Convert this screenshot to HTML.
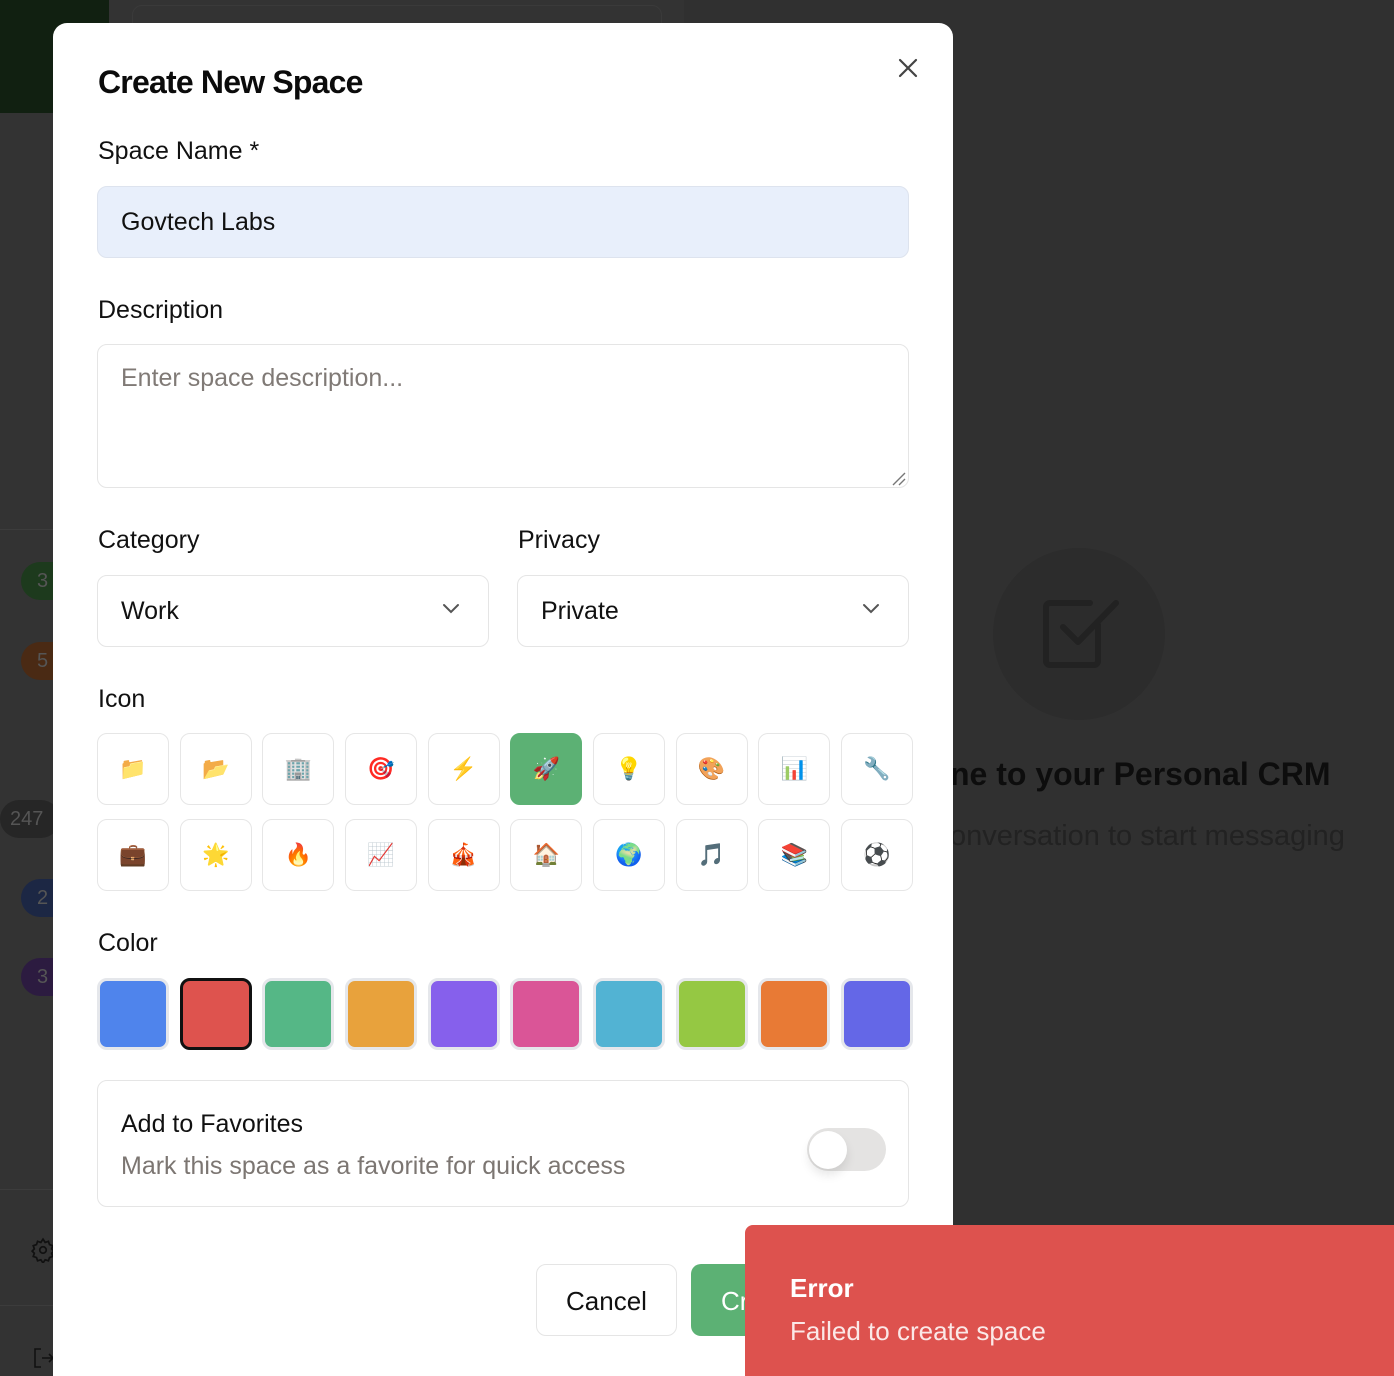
<!DOCTYPE html>
<html style="width:1394px;height:1376px;overflow:hidden"><head><meta charset="utf-8"><style>
*{box-sizing:border-box;margin:0;padding:0}
html,body{width:1394px;height:1376px;overflow:hidden}
body{background:#303030;font-family:"Liberation Sans",sans-serif;position:relative}
.abs{position:absolute}
.lbl{position:absolute;left:98px;font-size:25px;color:#111}
.box{position:absolute;border:1px solid #e5e5e5;border-radius:10px;background:#fff}
.tiles{position:absolute;left:97px;display:flex;gap:10.67px}
.tile{width:72px;height:72px;border:1px solid #e6e6e6;border-radius:10px;background:#fff;display:flex;align-items:center;justify-content:center;font-size:22px;font-family:"Noto Color Emoji","DejaVu Sans",sans-serif}
.sw{width:72px;height:72px;border:3px solid #e5e7eb;border-radius:10px}
.badge{position:absolute;height:38px;border-radius:19px;color:#555;font-size:20px;line-height:38px;padding-left:16px}
</style></head><body>
<div class="abs" style="left:0;top:0;width:109px;height:113px;background:#112011"></div>
<div class="abs" style="left:0;top:113px;width:53px;height:1263px;background:#333"></div>
<div class="abs" style="left:0;top:529px;width:53px;height:1px;background:#3c3c3c"></div>
<div class="abs" style="left:0;top:1189px;width:53px;height:1px;background:#3c3c3c"></div>
<div class="abs" style="left:0;top:1305px;width:53px;height:1px;background:#3c3c3c"></div>
<svg class="abs" style="left:30px;top:1237px" width="26" height="26" viewBox="0 0 24 24" fill="none" stroke="#111" stroke-width="1.6"><circle cx="12" cy="12" r="3"/><path d="M12 2l2 3 3-1 1 3 3 1-1 3 2 2-2 2 1 3-3 1-1 3-3-1-2 3-2-3-3 1-1-3-3-1 1-3-2-2 2-2-1-3 3-1 1-3 3 1z"/></svg>
<svg class="abs" style="left:32px;top:1346px" width="24" height="24" viewBox="0 0 24 24" fill="none" stroke="#111" stroke-width="1.6"><path d="M9 3H3v18h6M10 12h11M17 8l4 4-4 4"/></svg>
<div class="abs" style="left:109px;top:0;width:575px;height:40px;background:#333"></div>
<div class="abs" style="left:132px;top:5px;width:530px;height:40px;border:1px solid #3a3a3a;border-radius:10px"></div>
<div class="badge" style="left:21px;top:562px;width:60px;background:#1d3a1d">3</div>
<div class="badge" style="left:21px;top:642px;width:60px;background:#4a2a14">5</div>
<div class="badge" style="left:0;top:800px;width:60px;background:#262626;padding-left:10px">247</div>
<div class="badge" style="left:21px;top:879px;width:60px;background:#1c2744">2</div>
<div class="badge" style="left:21px;top:958px;width:60px;background:#2c1b40">3</div>
<div class="abs" style="left:993px;top:548px;width:172px;height:172px;border-radius:50%;background:#2c2c2c"></div>
<svg class="abs" style="left:1040px;top:595px" width="80" height="80" viewBox="0 0 80 80" fill="none" stroke="#222" stroke-width="6" stroke-linecap="round" stroke-linejoin="round"><path d="M58 30V66a4 4 0 0 1-4 4H10a4 4 0 0 1-4-4V12a4 4 0 0 1 4-4H50"/><path d="M23 32l15 15 38-39"/></svg>
<div class="abs" style="left:950px;top:756px;font-size:32px;font-weight:bold;color:#0d0d0d;white-space:nowrap">ne to your Personal CRM</div>
<div class="abs" style="left:950px;top:820px;font-size:29px;color:#222;white-space:nowrap">onversation to start messaging</div>

<div class="abs" style="left:53px;top:23px;width:900px;height:1353px;background:#fff;border-radius:14px 14px 0 0"></div>
<div class="abs" style="left:98px;top:64px;font-size:32px;font-weight:bold;color:#0b0b0b;letter-spacing:-0.8px">Create New Space</div>
<svg class="abs" style="left:897px;top:57px" width="22" height="22" viewBox="0 0 22 22" stroke="#444" stroke-width="2.2" stroke-linecap="round"><path d="M3 3l16 16M19 3L3 19"/></svg>
<div class="lbl" style="top:137px">Space Name *</div>
<div class="box" style="left:97px;top:186px;width:812px;height:72px;background:#e8effb;border-color:#dde3ee"></div>
<div class="abs" style="left:121px;top:208px;font-size:25px;color:#111">Govtech Labs</div>
<div class="lbl" style="top:296px">Description</div>
<div class="box" style="left:97px;top:344px;width:812px;height:144px"></div>
<div class="abs" style="left:121px;top:364px;font-size:25px;color:#807a76">Enter space description...</div>
<svg class="abs" style="left:891px;top:471px" width="16" height="16" stroke="#777" stroke-width="1.4"><path d="M2 14L14 2M8 14L14 8"/></svg>
<div class="lbl" style="top:526px">Category</div>
<div class="lbl" style="top:526px;left:518px">Privacy</div>
<div class="box" style="left:97px;top:575px;width:392px;height:72px"></div>
<div class="box" style="left:517px;top:575px;width:392px;height:72px"></div>
<div class="abs" style="left:121px;top:597px;font-size:25px;color:#111">Work</div>
<div class="abs" style="left:541px;top:597px;font-size:25px;color:#111">Private</div>
<svg class="abs" style="left:442px;top:603px" width="18" height="12" fill="none" stroke="#555" stroke-width="2" stroke-linecap="round"><path d="M2 2l7 7 7-7"/></svg>
<svg class="abs" style="left:862px;top:603px" width="18" height="12" fill="none" stroke="#555" stroke-width="2" stroke-linecap="round"><path d="M2 2l7 7 7-7"/></svg>
<div class="lbl" style="top:685px">Icon</div>
<div class="tiles" style="top:733px">
<div class="tile">📁</div><div class="tile">📂</div><div class="tile">🏢</div><div class="tile">🎯</div><div class="tile">⚡</div><div class="tile" style="background:#5cb174;border-color:#5cb174">🚀</div><div class="tile">💡</div><div class="tile">🎨</div><div class="tile">📊</div><div class="tile">🔧</div>
</div>
<div class="tiles" style="top:819px">
<div class="tile">💼</div><div class="tile">🌟</div><div class="tile">🔥</div><div class="tile">📈</div><div class="tile">🎪</div><div class="tile">🏠</div><div class="tile">🌍</div><div class="tile">🎵</div><div class="tile">📚</div><div class="tile">⚽</div>
</div>
<div class="lbl" style="top:929px">Color</div>
<div class="tiles" style="top:978px">
<div class="sw" style="background:#4f84ec"></div><div class="sw" style="background:#de534e;border-color:#111"></div><div class="sw" style="background:#55b786"></div><div class="sw" style="background:#e8a23c"></div><div class="sw" style="background:#8660ec"></div><div class="sw" style="background:#da5597"></div><div class="sw" style="background:#52b3d3"></div><div class="sw" style="background:#95c843"></div><div class="sw" style="background:#e87a35"></div><div class="sw" style="background:#6467e7"></div>
</div>
<div class="box" style="left:97px;top:1080px;width:812px;height:127px"></div>
<div class="abs" style="left:121px;top:1110px;font-size:25px;color:#111">Add to Favorites</div>
<div class="abs" style="left:121px;top:1152px;font-size:25px;color:#7c7672">Mark this space as a favorite for quick access</div>
<div class="abs" style="left:807px;top:1128px;width:79px;height:43px;border-radius:22px;background:#e4e3e2"></div>
<div class="abs" style="left:809px;top:1131px;width:38px;height:38px;border-radius:50%;background:#fff;box-shadow:0 6px 10px rgba(0,0,0,.1)"></div>
<div class="box" style="left:536px;top:1264px;width:141px;height:72px"></div>
<div class="abs" style="left:566px;top:1286px;font-size:26px;color:#111">Cancel</div>
<div class="abs" style="left:691px;top:1264px;width:120px;height:72px;border-radius:10px;background:#5cb174"></div>
<div class="abs" style="left:721px;top:1286px;font-size:26px;color:#fff">Create</div>

<div class="abs" style="left:745px;top:1225px;width:649px;height:151px;background:#dd524e;border-radius:8px 0 0 0"></div>
<div class="abs" style="left:790px;top:1273px;font-size:26px;font-weight:bold;color:#fff">Error</div>
<div class="abs" style="left:790px;top:1316px;font-size:26px;color:#fbe8e7">Failed to create space</div>
</body></html>
